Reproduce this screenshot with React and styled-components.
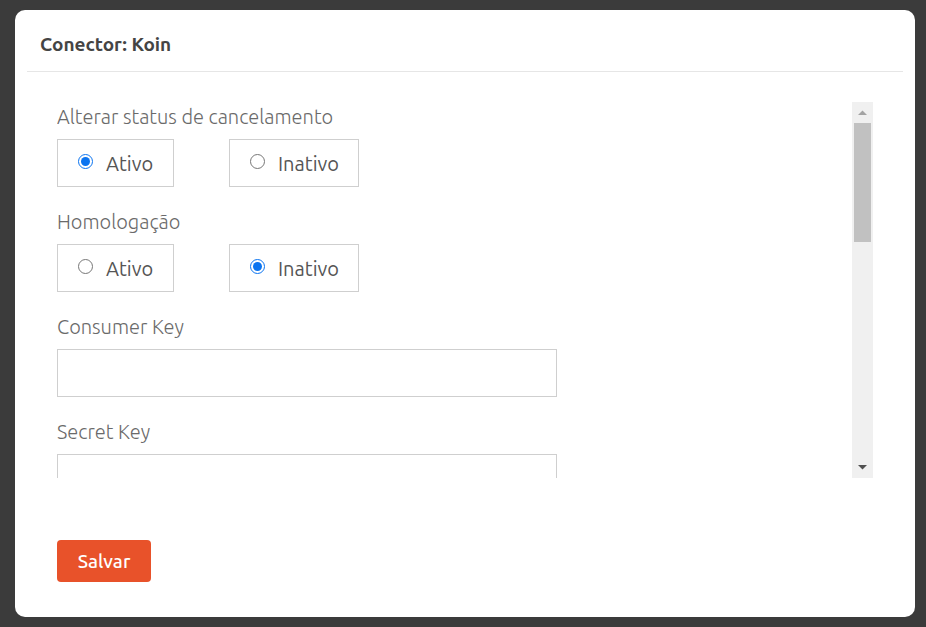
import React from "react"
import styled, { createGlobalStyle } from "styled-components"

const GlobalStyle = createGlobalStyle`
  html, body {
    margin: 0;
    padding: 0;
    background: #3b3b3b;
    font-family: "Ubuntu", "Open Sans", "Noto Sans", sans-serif;
  }
`

let Backdrop = styled.div`
  padding: 10px 11px 10px 15px;
  min-height: 627px;
  box-sizing: border-box;
`

let Modal = styled.div`
  background: #fff;
  border-radius: 10px;
  width: 900px;
  height: 607px;
  display: flex;
  flex-direction: column;
`

let Header = styled.div`
  margin: 0 12px;
  height: 61px;
  padding-left: 13px;
  display: flex;
  align-items: center;
  border-bottom: 1px solid #e6e6e6;
`

let Title = styled.h5`
  margin: 0;
  font-size: 19px;
  font-weight: 700;
  color: #444;
  padding-top: 6px;
`

let Body = styled.div`
  padding: 30px 42px 0;
`

let Scroller = styled.div`
  height: 376px;
  display: flex;
`

let Content = styled.div`
  flex: 1;
  overflow: hidden;
  padding-top: 3px;
`

let Track = styled.div`
  width: 21px;
  background: #f0f0f0;
  display: flex;
  flex-direction: column;
  align-items: center;
`

let Arrow = styled.div`
  height: 21px;
  width: 21px;
  display: flex;
  align-items: center;
  justify-content: center;
`

let Thumb = styled.div`
  width: 17px;
  height: 119px;
  background: #c1c1c1;
`

let Spacer = styled.div`
  flex: 1;
`

let Field = styled.div`
  margin-bottom: 23px;
`

let Label = styled.div`
  font-size: 20px;
  font-weight: 300;
  color: #6a6a6a;
  line-height: 24px;
  margin-bottom: 10px;
`

let Options = styled.div`
  display: flex;
  gap: 55px;
`

let Option = styled.label`
  box-sizing: border-box;
  width: ${(p) => p.w}px;
  height: 48px;
  border: 1px solid #cfcfcf;
  display: flex;
  align-items: center;
  padding-left: 20px;
  gap: 13px;
  font-size: 20px;
  color: #555;
`

let Radio = styled.input`
  width: 15px;
  height: 15px;
  margin: 0;
  accent-color: #0b74f0;
  position: relative;
  top: -2px;
`

let TextInput = styled.input`
  box-sizing: border-box;
  width: 500px;
  height: 48px;
  border: 1px solid #cfcfcf;
  border-radius: 0;
  outline: none;
  display: block;
`

let Footer = styled.div`
  padding: 62px 42px 0;
`

let SaveButton = styled.button`
  width: 94px;
  height: 42px;
  border: none;
  border-radius: 4px;
  background: #e8522a;
  color: #fff;
  font-family: inherit;
  font-size: 19px;
  font-weight: 500;
  cursor: pointer;
`

let RadioField = ({ label, name, value }) => (
  <Field>
    <Label>{label}</Label>
    <Options>
      <Option w={117}>
        <Radio type="radio" name={name} defaultChecked={value === "ativo"} />
        Ativo
      </Option>
      <Option w={130}>
        <Radio type="radio" name={name} defaultChecked={value === "inativo"} />
        Inativo
      </Option>
    </Options>
  </Field>
)

let TextField = ({ label }) => (
  <Field>
    <Label>{label}</Label>
    <TextInput type="text" />
  </Field>
)

let ScrollBar = () => (
  <Track>
    <Arrow>
      <svg width="9" height="5" viewBox="0 0 9 5">
        <polygon points="0,5 9,5 4.5,0.5" fill="#a3a3a3" />
      </svg>
    </Arrow>
    <Thumb />
    <Spacer />
    <Arrow>
      <svg width="9" height="5" viewBox="0 0 9 5">
        <polygon points="0,0 9,0 4.5,4.5" fill="#505050" />
      </svg>
    </Arrow>
  </Track>
)

let App = () => (
  <React.Fragment>
    <GlobalStyle />
    <Backdrop>
      <Modal>
        <Header>
          <Title>Conector: Koin</Title>
        </Header>
        <Body>
          <Scroller>
            <Content>
              <RadioField label="Alterar status de cancelamento" name="cancel" value="ativo" />
              <RadioField label="Homologação" name="homolog" value="inativo" />
              <TextField label="Consumer Key" />
              <TextField label="Secret Key" />
              <TextField label="Callback URL" />
            </Content>
            <ScrollBar />
          </Scroller>
        </Body>
        <Footer>
          <SaveButton>Salvar</SaveButton>
        </Footer>
      </Modal>
    </Backdrop>
  </React.Fragment>
)

export default App
